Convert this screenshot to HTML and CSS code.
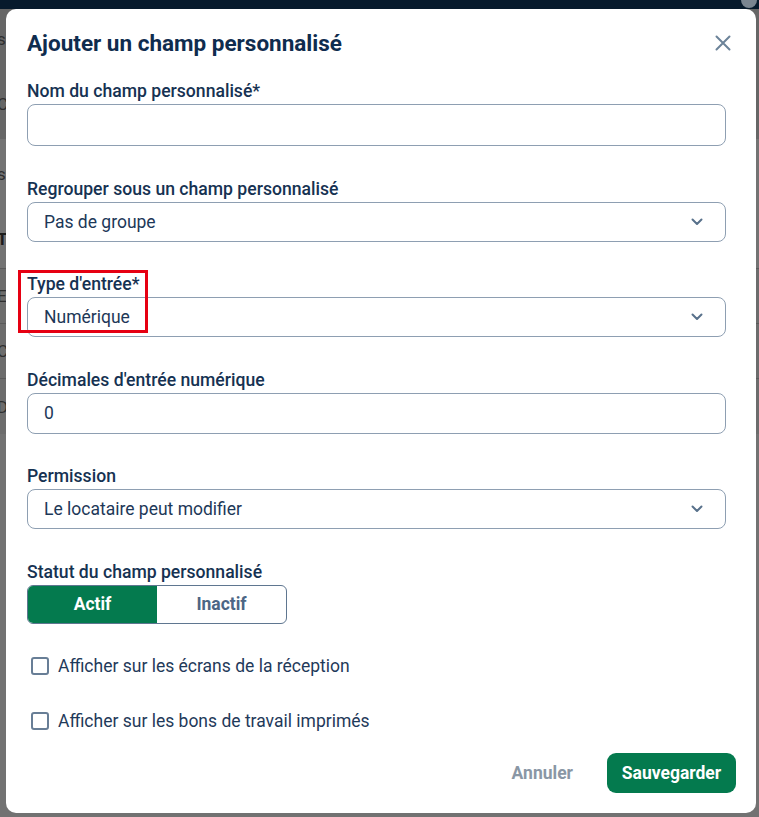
FILE: index.html
```html
<!DOCTYPE html>
<html lang="fr">
<head>
<meta charset="utf-8">
<title>Ajouter un champ personnalisé</title>
<link rel="stylesheet" href="styles.css">
</head>
<body>
<div class="page">
  <header class="topbar"><span class="avatar"></span></header>
  <div class="under">
    <div class="under-row r1"><span>s</span></div>
    <div class="under-row r2"><span>C</span></div>
    <div class="under-row r3"><span>s</span></div>
    <div class="under-row r4 line"><span class="b">T</span></div>
    <div class="under-row r5 line"><span>E</span></div>
    <div class="under-row r5 line"><span>C</span></div>
    <div class="under-row r5"><span>D</span></div>
  </div>
</div>

<div class="modal" role="dialog" aria-labelledby="mtitle">
  <div class="modal-head">
    <h2 id="mtitle" class="modal-title">Ajouter un champ personnalisé</h2>
    <button class="close" aria-label="Fermer">
      <svg width="16" height="16" viewBox="0 0 16 16"><path d="M1.5 1.5 L14.5 14.5 M14.5 1.5 L1.5 14.5" stroke="#6c8399" stroke-width="2" stroke-linecap="round" fill="none"/></svg>
    </button>
  </div>

  <div class="field first">
    <label class="label">Nom du champ personnalisé*</label>
    <div class="input name"></div>
  </div>

  <div class="field">
    <label class="label">Regrouper sous un champ personnalisé</label>
    <div class="input select"><span>Pas de groupe</span>
      <svg class="chev" width="12" height="8" viewBox="0 0 12 8"><path d="M1.5 1.5 L6 6 L10.5 1.5" stroke="#58718b" stroke-width="2" fill="none" stroke-linecap="round" stroke-linejoin="round"/></svg>
    </div>
  </div>

  <div class="field marked">
    <label class="label">Type d'entrée*</label>
    <div class="input select"><span>Numérique</span>
      <svg class="chev" width="12" height="8" viewBox="0 0 12 8"><path d="M1.5 1.5 L6 6 L10.5 1.5" stroke="#58718b" stroke-width="2" fill="none" stroke-linecap="round" stroke-linejoin="round"/></svg>
    </div>
    <span class="highlight"></span>
  </div>

  <div class="field">
    <label class="label">Décimales d'entrée numérique</label>
    <div class="input tall"><span>0</span></div>
  </div>

  <div class="field">
    <label class="label">Permission</label>
    <div class="input select"><span>Le locataire peut modifier</span>
      <svg class="chev" width="12" height="8" viewBox="0 0 12 8"><path d="M1.5 1.5 L6 6 L10.5 1.5" stroke="#58718b" stroke-width="2" fill="none" stroke-linecap="round" stroke-linejoin="round"/></svg>
    </div>
  </div>

  <div class="field">
    <label class="label">Statut du champ personnalisé</label>
    <div class="toggle">
      <span class="seg on">Actif</span>
      <span class="seg">Inactif</span>
    </div>
  </div>

  <div class="check first-check"><span class="box"></span><span>Afficher sur les écrans de la réception</span></div>
  <div class="check"><span class="box"></span><span>Afficher sur les bons de travail imprimés</span></div>

  <div class="footer">
    <button class="btn ghost">Annuler</button>
    <button class="btn primary">Sauvegarder</button>
  </div>
</div>
</body>
</html>
```

FILE: styles.css
```css
* { box-sizing: border-box; }
html, body { margin: 0; padding: 0; }
body {
  width: 759px;
  height: 817px;
  overflow: hidden;
  font-family: Roboto, "Liberation Sans", sans-serif;
  background: #727272;
}
.page { height: 817px; }
.topbar {
  height: 9px;
  background: #071a2c;
  position: relative;
}
.avatar {
  position: absolute;
  right: 2px;
  top: -8px;
  width: 16px;
  height: 16px;
  border-radius: 50%;
  background: #7a8590;
}
.under {
  background: #6c6c6c;
}
.under-row {
  height: 55px;
  display: flex;
  align-items: center;
  color: #2e2e2e;
  font-size: 17px;
  padding-left: 0;
}
.under-row span { margin-left: -3px; }
.under-row.r1 { height: 60px; background: #666; }
.under-row.r2 { height: 70px; background: #666; }
.under-row.r3 { height: 70px; background: #737373; }
.under-row.r4 { height: 60px; background: #737373; }
.under-row .b { font-weight: 700; color: #1c1c1c; }
.under-row.line { border-bottom: 1px solid #5a5a5a; }

.modal {
  position: fixed;
  left: 6px;
  top: 9px;
  width: 750px;
  height: 804px;
  background: #fff;
  border-radius: 10px;
  padding: 20px 30px 20px 21px;
  display: flex;
  flex-direction: column;
  color: #14304f;
}
.modal-head {
  display: flex;
  align-items: center;
  justify-content: space-between;
  height: 28px;
}
.modal-title {
  margin: 0;
  font-size: 22.5px;
  line-height: 28px;
  font-weight: 700;
  color: #0f2c4e;
}
.close {
  border: 0;
  background: none;
  padding: 0;
  margin-right: -5px;
  width: 16px;
  height: 16px;
  display: flex;
}
.field { margin-top: 32.5px; position: relative; }
.field.first { margin-top: 24px; }
.label {
  display: block;
  font-size: 17.6px;
  line-height: 20px;
  font-weight: 500;
  color: #163252;
  margin-bottom: 3px;
}
.input {
  height: 40px;
  border: 1px solid #8e9fb2;
  border-radius: 8px;
  display: flex;
  align-items: center;
  justify-content: space-between;
  padding: 0 22px 0 16px;
  font-size: 17.5px;
  color: #1d3858;
}
.input.name { height: 42px; }
.input.tall { height: 41px; }
.chev { display: block; }
.highlight {
  position: absolute;
  left: -9px;
  top: -4px;
  width: 130px;
  height: 63px;
  border: 3px solid #e60012;
  pointer-events: none;
}
.toggle {
  display: flex;
  width: 260px;
  height: 39px;
  border: 1px solid #5f7690;
  border-radius: 6px;
  overflow: hidden;
}
.seg {
  flex: 1;
  display: flex;
  align-items: center;
  justify-content: center;
  font-size: 17.5px;
  font-weight: 700;
  color: #4c6685;
}
.seg.on {
  background: #047a4e;
  color: #fff;
}
.check {
  display: flex;
  align-items: center;
  gap: 9px;
  height: 24px;
  margin-top: 31px;
  padding-left: 4px;
  font-size: 17.5px;
  color: #1f3a5a;
}
.check.first-check { margin-top: 30px; }
.box {
  width: 18px;
  height: 18px;
  border: 2px solid #687e96;
  border-radius: 3px;
}
.footer {
  margin-top: auto;
  display: flex;
  justify-content: flex-end;
  align-items: center;
  gap: 34px;
}
.btn {
  font-family: inherit;
  font-size: 17.5px;
  font-weight: 700;
  border: 0;
  border-radius: 9px;
  height: 40px;
  cursor: pointer;
}
.btn.ghost { background: none; color: #8a97a5; padding: 0; }
.btn.primary {
  background: #047a4e;
  color: #fff;
  width: 129px;
  margin-right: -10px;
}
```
